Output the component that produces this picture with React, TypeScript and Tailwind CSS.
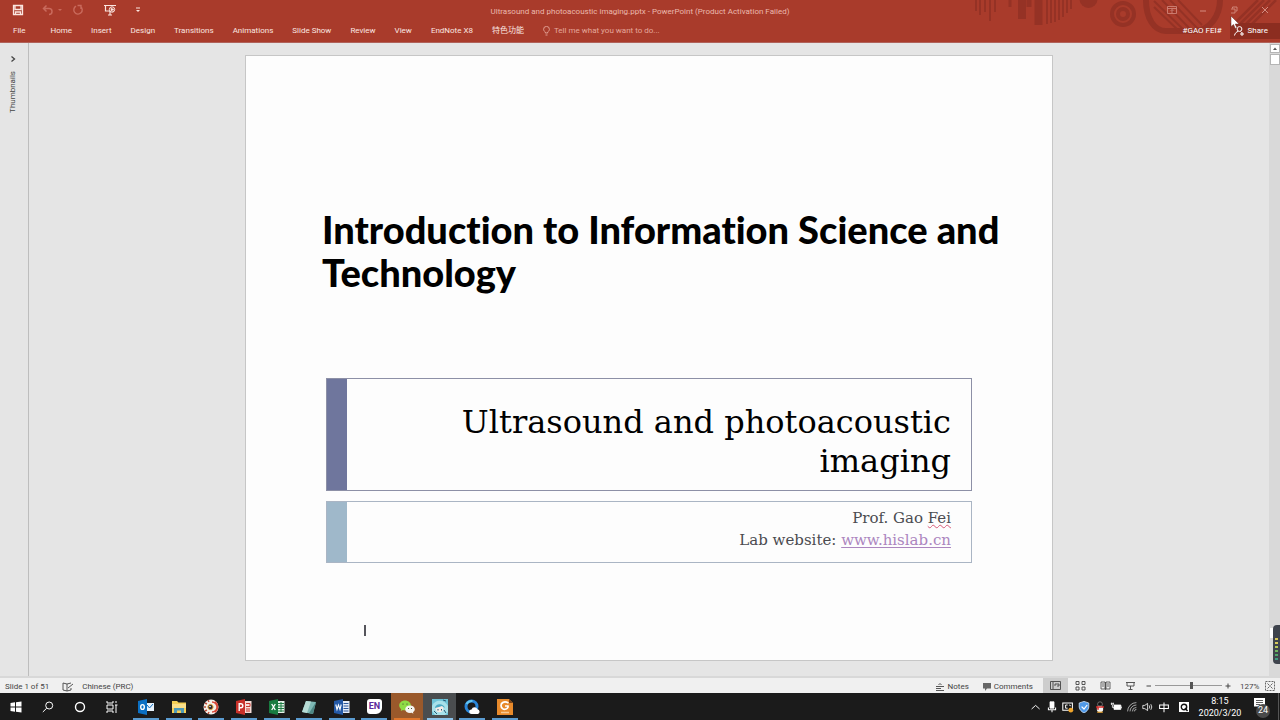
import type { ReactNode } from "react";

const tabs = ["Home", "Insert", "Design", "Transitions", "Animations", "Slide Show", "Review", "View", "EndNote X8", "特色功能"];

type IconProps = { label: string; children: ReactNode; className?: string; box?: string };

function Glyph({ children, className = "size-4", box = "0 0 16 16" }: Omit<IconProps, "label">) {
  return (
    <svg viewBox={box} className={className} fill="none" stroke="currentColor" aria-hidden="true">
      {children}
    </svg>
  );
}

function IconButton({ label, children, className = "" }: IconProps) {
  return (
    <button type="button" aria-label={label} className={`flex shrink-0 items-center justify-center ${className}`}>
      {children}
    </button>
  );
}

function HeaderPattern() {
  return (
    <svg viewBox="0 0 330 42" className="absolute top-0 right-0 h-[42px] w-[330px]" fill="none" stroke="#953225" aria-hidden="true">
      <path d="M26 0v11M30 0v15M35 0v12M40 0v21M45 0v12" strokeWidth="2" />
      <path d="M60 0v7" strokeWidth="3" />
      <path d="M72 0v19M88.500 0v25" strokeWidth="8" />
      <path d="M79 0v7" strokeWidth="5" />
      <path d="M97 0v24M101 0v23M105 0v22M109 0v20M113 0v17M117 0v13M121 0v9" strokeWidth="2" />
      <circle cx="138.500" cy="-1" r="9" fill="#953225" stroke="none" />
      <circle cx="173" cy="14" r="11" strokeWidth="4" />
      <circle cx="173" cy="14" r="5" strokeWidth="4" />
      <path d="M196 0c0 18 8 31 20 31h28c16 0 26-16 26-31" strokeWidth="6" />
      <path d="M204 7l26 25M204 1l32 31M212 0l30 31M220 0l28 29M228 0l24 25" strokeWidth="2" />
      <path d="M284 24L308 0M290 24L314 0M296 24L320 0M302 24L326 0" strokeWidth="2.500" />
    </svg>
  );
}

function Header() {
  return (
    <header className="relative flex flex-col border-b border-[#b0625a] bg-[#a93b2b] text-[#fbe6e0]">
      <HeaderPattern />
      <div className="relative grid h-5 grid-cols-[1fr_auto_1fr] items-center">
        <div className="flex items-center pl-3">
          <IconButton label="Save" className="w-3">
            <Glyph className="size-3" box="0 0 12 12">
              <path d="M1.500 1.500h9v9h-9zM3 1.500V5.500h6V1.500M3.500 10.500V8h5v2.500" strokeWidth="1.300" />
            </Glyph>
          </IconButton>
          <IconButton label="Undo" className="ml-4 w-4 text-[#c96a5c]">
            <Glyph className="size-3" box="0 0 12 12">
              <path d="M4.500 1.500L1.500 4.500l3 3M2 4.500h5a3 3 0 010 6" strokeWidth="1.500" />
            </Glyph>
          </IconButton>
          <IconButton label="Undo history" className="w-2 text-[#c96a5c]">
            <Glyph className="size-1" box="0 0 4 4"><path d="M0 1h4L2 3z" fill="currentColor" stroke="none" /></Glyph>
          </IconButton>
          <IconButton label="Repeat" className="ml-1 w-5 text-[#c96a5c]">
            <Glyph className="size-3" box="0 0 12 12">
              <path d="M4 2.200A4.200 4.200 0 1 0 8.500 2.500M5.500 1.500h3.500V5" strokeWidth="1.400" />
            </Glyph>
          </IconButton>
          <IconButton label="Start from beginning" className="ml-3 w-5">
            <Glyph className="size-3" box="0 0 12 12">
              <path d="M0 1.500h12M1.500 2v5h4M4 11h4M6 7v4" strokeWidth="1.200" />
              <circle cx="8" cy="5.500" r="2.700" />
              <path d="M7 4l3 1.500L7 7zM8 8l2-1" fill="currentColor" strokeWidth="0.500" />
            </Glyph>
          </IconButton>
          <IconButton label="Customize toolbar" className="ml-2 w-5">
            <Glyph className="size-1.5" box="0 0 6 6"><path d="M1 1h4" /><path d="M1 3h4L3 5z" fill="currentColor" stroke="none" /></Glyph>
          </IconButton>
        </div>
        <h1 className="pt-1 text-[8px] leading-4 text-[#ebb8ad]">
          Ultrasound and photoacoustic imaging.pptx - PowerPoint (Product Activation Failed)
        </h1>
        <div className="flex items-center justify-end text-[#d58c80]">
          <IconButton label="Ribbon display options" className="w-[31px]">
            <Glyph className="size-2.5" box="0 0 10 10"><path d="M.5 1.500h9v7h-9zM.5 3.500h9M5 8V4.500M3.500 6L5 4.500 6.500 6" strokeWidth="0.800" /></Glyph>
          </IconButton>
          <IconButton label="Minimize" className="w-[31px]">
            <Glyph className="size-2" box="0 0 8 8"><path d="M1 5h6" /></Glyph>
          </IconButton>
          <IconButton label="Restore" className="w-[31px]">
            <Glyph className="size-2" box="0 0 8 8"><path d="M1 3h4v4H1M2.500 2.500V1H7v4H5.500" strokeWidth="0.900" /></Glyph>
          </IconButton>
          <IconButton label="Close" className="w-[31px]">
            <Glyph className="size-2" box="0 0 8 8"><path d="M1 1l6 6M7 1L1 7" /></Glyph>
          </IconButton>
        </div>
      </div>
      <div className="relative flex h-[22px] items-start justify-between text-[8px] leading-[22px]">
        <nav aria-label="Ribbon" className="flex items-center gap-[19px] pl-[13px]">
          <button type="button" className="mr-1.5">File</button>
          {tabs.map((t) => (
            <button type="button" key={t}>{t}</button>
          ))}
          <button type="button" className="flex items-center gap-1 text-[#e5a79b]">
            <Glyph className="h-2.5 w-[7px]" box="0 0 7 10">
              <path d="M2.300 7V6C1 5 .6 4.200.6 3.300a2.900 2.900 0 015.800 0C6.400 4.200 6 5 4.700 6v1zM2.500 9h2" strokeWidth="0.900" />
            </Glyph>
            Tell me what you want to do...
          </button>
        </nav>
        <div className="flex items-center gap-2">
          <span className="text-white">#GAO FEI#</span>
          <button type="button" className="flex h-4 items-center gap-1 bg-[#8c2d20] pr-3 pl-1 text-white">
            <Glyph className="size-2.5" box="0 0 10 10">
              <circle cx="5.500" cy="3" r="2.400" />
              <path d="M.5 9.500C1 7 2.500 5.800 4.200 5.400M6.500 5.500l1 1M6 8h4M8 6v4" />
            </Glyph>
            Share
          </button>
        </div>
      </div>
      <svg viewBox="0 0 10 14" className="absolute top-4 right-[40px] h-3.5 w-2.5" aria-hidden="true">
        <path d="M1 0v10.500l2.500-2 1.800 4 1.700-.8-1.800-3.700H9z" fill="#fff" stroke="#6b2a22" strokeWidth="0.500" />
      </svg>
    </header>
  );
}

function Slide() {
  return (
    <article className="flex aspect-[4/3] w-[808px] max-w-full flex-col border border-[#c6c6c6] bg-[#fdfdfd] px-20 pt-[152px] text-black">
      <h2 className="-mr-8 -ml-1 font-['Lato',sans-serif] text-[38px] leading-[43px] font-black [font-variant-ligatures:none]">
        Introduction to Information Science and Technology
      </h2>
      <section className="mt-[84px] flex h-[113px] border border-[#8d90a6]">
        <div className="w-5 shrink-0 bg-[#6f769d]" />
        <p className="flex-1 pt-6 pr-5 pl-20 text-right font-['DejaVu_Serif',serif] text-[32px] leading-[39px]">
          Ultrasound and photoacoustic imaging
        </p>
      </section>
      <section className="mt-[10px] flex h-[62px] border border-[#aab5c4]">
        <div className="w-5 shrink-0 bg-[#9fb8ca]" />
        <div className="flex-1 pt-[5px] pr-5 text-right font-['DejaVu_Serif',serif] text-[15px] leading-[22px] text-[#4b4b50]">
          <p>Prof. Gao <span className="underline decoration-[#d85a78] decoration-wavy decoration-1 underline-offset-1">Fei</span></p>
          <p>Lab website: <a href="http://www.hislab.cn" className="text-[#ac86bf] underline underline-offset-2">www.hislab.cn</a></p>
        </div>
      </section>
      <div className="mt-[62px] ml-[38px] h-[11px] w-0.5 bg-[#55555c]" />
    </article>
  );
}

function Workspace() {
  return (
    <main className="flex flex-1 bg-[#e5e5e5]">
      <aside className="flex w-[29px] shrink-0 flex-col items-center border-r border-[#bdbdbd] pt-3 pr-[3px] text-[#444]">
        <IconButton label="Expand thumbnails" className="h-2 w-3">
          <Glyph className="size-1.5" box="0 0 6 6"><path d="M1.500.5L4.500 3 1.500 5.500" strokeWidth="1.300" /></Glyph>
        </IconButton>
        <span className="mt-2 rotate-180 text-[8px] leading-3 [writing-mode:vertical-rl]">Thumbnails</span>
      </aside>
      <div className="flex flex-1 items-start justify-center pt-3 pb-3.5">
        <Slide />
      </div>
      <div className="relative flex w-[11px] shrink-0 flex-col items-center gap-px bg-[#d9d9d9] pt-px">
        <IconButton label="Scroll up" className="h-[9px] w-[10px] border border-[#b5b5b5] bg-white">
          <Glyph className="size-1" box="0 0 4 4"><path d="M0 3h4L2 .5z" fill="#555" stroke="none" /></Glyph>
        </IconButton>
        <div className="h-[11px] w-[10px] border border-[#b5b5b5] bg-white" />
        <div className="absolute right-[2px] bottom-[38px] h-2.5 w-2 bg-white" />
        <div className="absolute right-0 bottom-3 flex h-[39px] w-[7px] flex-col items-center justify-end gap-0.5 rounded-l-sm bg-[#3f444d] pb-1">
          <span className="h-0.5 w-[3px] bg-[#d8c95a]" />
          <span className="h-0.5 w-[3px] bg-[#d8c95a]" />
          <span className="h-0.5 w-[3px] bg-[#b7c957]" />
          <span className="h-0.5 w-[3px] bg-[#6fb661]" />
          <span className="h-0.5 w-[3px] bg-[#4fa66b]" />
          <span className="h-0.5 w-[3px] bg-[#3f9a80]" />
        </div>
      </div>
    </main>
  );
}

function StatusBar() {
  return (
    <footer className="flex h-[17px] shrink-0 items-center justify-between border-t-2 border-[#d8d8d8] bg-[#f0f0f0] text-[8px] leading-4 text-[#444]">
      <div className="flex items-center pt-0.5 pl-[5px]">
        <span>Slide 1 of 51</span>
        <IconButton label="Spelling" className="ml-[13px] w-3">
          <Glyph className="h-2.5 w-3" box="0 0 12 10"><path d="M5 2v7L1 8V1zM5 2l4-1M5 9l4-1V6M6 6l5-4" strokeWidth="0.900" /></Glyph>
        </IconButton>
        <button type="button" className="ml-2">Chinese (PRC)</button>
      </div>
      <div className="flex items-center">
        <button type="button" className="flex items-center gap-1 pt-0.5">
          <Glyph className="size-2" box="0 0 8 8"><path d="M0 3.500h8M0 5.500h5M0 7.500h8M2.500 2L4 .5 5.500 2" strokeWidth="0.900" /></Glyph>
          Notes
        </button>
        <button type="button" className="ml-3.5 flex items-center gap-[3px] pt-0.5">
          <Glyph className="size-2" box="0 0 8 8"><path d="M0 0h8v5.500H4L2 8V5.500H0z" fill="#666" stroke="none" /></Glyph>
          Comments
        </button>
        <IconButton label="Normal view" className="ml-2.5 h-[15px] w-[25px] bg-[#cdcdcd]">
          <Glyph className="h-2.5 w-[11px]" box="0 0 11 10"><path d="M.5.5h10v8H.5zM3 1v7M5 5V3h4v2H7" strokeWidth="0.900" /></Glyph>
        </IconButton>
        <IconButton label="Slide sorter" className="w-[25px]">
          <Glyph className="h-2.5 w-[11px]" box="0 0 11 10"><path d="M1 .5h3v3H1zM7 .5h3v3H7zM1 6h3v3H1zM7 6h3v3H7z" strokeWidth="0.900" /></Glyph>
        </IconButton>
        <IconButton label="Reading view" className="w-[25px]">
          <Glyph className="h-2.5 w-[11px]" box="0 0 11 10"><path d="M1 1h4v7H1zM6 1h4v7H6zM5.500 1v8M2 3h2M2 5h2M7 3h2M7 5h2" strokeWidth="0.800" /></Glyph>
        </IconButton>
        <IconButton label="Slide show" className="w-[25px]">
          <Glyph className="h-2.5 w-[11px]" box="0 0 11 10"><path d="M1 1.500h9M2 2v3h7V2M5.500 5v3M3.500 8.500h4" strokeWidth="0.900" /></Glyph>
        </IconButton>
        <IconButton label="Zoom out" className="w-3">
          <Glyph className="size-1.5" box="0 0 6 6"><path d="M.5 3h4.500" /></Glyph>
        </IconButton>
        <input
          type="range"
          aria-label="Zoom"
          min={0}
          max={100}
          defaultValue={55}
          className="h-2 w-[67px] appearance-none bg-transparent [&::-webkit-slider-runnable-track]:h-px [&::-webkit-slider-runnable-track]:bg-[#999] [&::-webkit-slider-thumb]:-mt-[3px] [&::-webkit-slider-thumb]:h-[7px] [&::-webkit-slider-thumb]:w-[3px] [&::-webkit-slider-thumb]:appearance-none [&::-webkit-slider-thumb]:bg-[#555]"
        />
        <IconButton label="Zoom in" className="w-3">
          <Glyph className="size-1.5" box="0 0 6 6"><path d="M.5 3h5M3 .5v5" /></Glyph>
        </IconButton>
        <span className="ml-1.5 w-[18px] pt-0.5 whitespace-nowrap">127%</span>
        <IconButton label="Fit to window" className="mr-1 ml-1.5 w-3">
          <Glyph className="size-2.5" box="0 0 10 10"><path d="M.5.500h9v9h-9z" strokeDasharray="2 1" strokeWidth="0.800" /><path d="M2.500 2.500l2 2M7.500 2.500l-2 2M2.500 7.500l2-2M7.500 7.500l-2-2" strokeWidth="0.800" /></Glyph>
        </IconButton>
      </div>
    </footer>
  );
}

const icon = "h-4 w-4";

const systemButtons = [
  {
    label: "Start",
    art: <Glyph className="size-3"  box="0 0 12 12"><path d="M.5 2L5 1.300v4.200H.5zM6 1.200L11.500.4v5.100H6zM.5 6.500H5v4.200L.5 10zM6 6.500h5.500v5.100L6 10.800z" fill="#fff" stroke="none" /></Glyph>,
  },
  { label: "Search", art: <Glyph className="size-3" box="0 0 12 12"><circle cx="7.200" cy="4.500" r="3.500" /><path d="M4.700 7.200L.8 11" /></Glyph> },
  { label: "Cortana", art: <Glyph className="size-3" box="0 0 12 12"><circle cx="6" cy="6" r="4.500" strokeWidth="1.400" /></Glyph> },
  { label: "Task view", art: <Glyph className="size-3" box="0 0 12 12"><path d="M1 0v2h6V0M1 12v-2h6v2M1 4h6v4H1zM10 0v2M10 4v8M9 4h2.500" strokeWidth="1" /></Glyph> },
];

type App = { label: string; bg: string; bar: string; art: ReactNode };

const plain = "bg-transparent";
const blueBar = "bg-[#5a9bd0]";

const apps: App[] = [
  {
    label: "Outlook", bg: plain, bar: blueBar,
    art: (
      <Glyph className={icon}>
        <path d="M8 4h8v8H8z" fill="#e8f2fb" stroke="none" /><path d="M9 6l2.500 3L15 5" stroke="#0f6cbd" />
        <path d="M0 2l9-2v16l-9-2z" fill="#0b70c4" stroke="none" /><ellipse cx="4.500" cy="8" rx="1.800" ry="2.400" stroke="#fff" strokeWidth="1.400" />
      </Glyph>
    ),
  },
  {
    label: "File Explorer", bg: plain, bar: blueBar,
    art: (
      <Glyph className={icon}>
        <path d="M1 2h5l1.500 1.500H15V14H1z" fill="#f4cf56" stroke="none" /><path d="M1 5h14v4H1z" fill="#fbe08a" stroke="none" />
        <path d="M3 14V9h10v5h-3v-2.500H6V14z" fill="#4f9bb8" stroke="none" />
      </Glyph>
    ),
  },
  {
    label: "Recorder", bg: plain, bar: blueBar,
    art: (
      <Glyph className={icon}>
        <circle cx="8" cy="8" r="7.500" fill="#f5f1ea" stroke="none" />
        <path d="M9 3a5 5 0 010 10M12 2.500a7 7 0 010 11" stroke="#d84a3a" strokeWidth="1.400" />
        <path d="M2 4l2 1M1 8h2M2 12l2-1M5 1l1 2M5 15l1-2" stroke="#be513e" strokeWidth="1.500" />
        <circle cx="7.500" cy="8" r="2.600" fill="#2c2730" stroke="#e2a43a" /><circle cx="7" cy="7.500" r=".8" fill="#fff" stroke="none" />
      </Glyph>
    ),
  },
  {
    label: "PowerPoint", bg: plain, bar: blueBar,
    art: (
      <Glyph className={icon}>
        <path d="M8 2h7.500v12H8z" fill="#f6dcd8" stroke="none" /><path d="M10 4.500h4v3h-4M10 10h4M10 12h4" stroke="#c8372d" />
        <path d="M0 2l9-2v16l-9-2z" fill="#c8312a" stroke="none" /><path d="M3.200 12V4.800h1.600a1.900 1.900 0 010 4H3.200" stroke="#fff" strokeWidth="1.400" />
      </Glyph>
    ),
  },
  {
    label: "Excel", bg: plain, bar: blueBar,
    art: (
      <Glyph className={icon}>
        <path d="M8 2h7.500v12H8z" fill="#e5f2e9" stroke="none" /><path d="M9 4.500h6M9 7h6M9 9.500h6M9 12h6M12 3v10" stroke="#1f7c45" />
        <path d="M0 2l9-2v16l-9-2z" fill="#187b40" stroke="none" /><path d="M2.700 5l3.600 6M6.300 5l-3.600 6" stroke="#fff" strokeWidth="1.300" />
      </Glyph>
    ),
  },
  {
    label: "Notes", bg: plain, bar: blueBar,
    art: (
      <Glyph className={icon}>
        <path d="M5 2l10 1-3 12-11-2z" fill="#7fb9b5" stroke="none" /><path d="M5 2l5 .5L6 14l-5-1z" fill="#b7dcd6" stroke="none" /><path d="M15 3l-3 12-4-.8z" fill="#4e8785" stroke="none" />
      </Glyph>
    ),
  },
  {
    label: "Word", bg: plain, bar: blueBar,
    art: (
      <Glyph className={icon}>
        <path d="M8 2h7.500v12H8z" fill="#e6edf8" stroke="none" /><path d="M9.500 4.500h5M9.500 7h5M9.500 9.500h5M9.500 12h5" stroke="#2b579a" />
        <path d="M0 2l9-2v16l-9-2z" fill="#2459a6" stroke="none" /><path d="M1.800 5.500L3 10.500 4.500 6 6 10.500 7.200 5.500" stroke="#fff" strokeWidth="1.100" />
      </Glyph>
    ),
  },
  {
    label: "EndNote", bg: plain, bar: blueBar,
    art: <span className="flex size-[15px] items-center justify-center rounded-[3px] rounded-br-md bg-white text-[9px] leading-none font-bold text-[#5b2a9a]">EN</span>,
  },
  {
    label: "WeChat", bg: "bg-[#9a592b]", bar: "bg-[#e0762c]",
    art: (
      <Glyph className={icon}>
        <path d="M6 1.500C2.800 1.500.2 3.700.2 6.400c0 1.500.8 2.800 2 3.700L1.800 12l2.100-1.100c3.900 1.100 8-1.100 8-4.500 0-2.700-2.600-4.900-5.900-4.900z" fill="#8edb45" stroke="none" />
        <path d="M11 6.500c-2.700 0-4.800 1.700-4.800 3.800S8.300 14 11 14l1.700-.2 1.700.9-.4-1.500c1.100-.7 1.800-1.700 1.800-2.900 0-2.100-2.100-3.800-4.800-3.800z" fill="#f4f4f0" stroke="none" />
        <path d="M4 4.500v1.200M8 4.500v1.200M9.500 9v1M12.500 9v1" stroke="#4a5a36" />
      </Glyph>
    ),
  },
  {
    label: "Avatar", bg: "bg-[#4a4d4f]", bar: "bg-[#8cc4ec]",
    art: (
      <Glyph className={icon}>
        <path d="M0 0h16v16H0z" fill="#6ec4d8" stroke="none" /><path d="M0 7c2-6 12-8 16 0v6l-3 3H3l-3-4z" fill="#a8e1ea" stroke="none" />
        <circle cx="7.500" cy="9.500" r="3.800" fill="#f7ebe6" stroke="none" /><path d="M3 9c0-4 8-6 10 0L10 7 7 8z" fill="#4aa9c3" stroke="none" />
        <path d="M6 10v1.500M9.500 10v1.500" stroke="#205f80" /><path d="M11 1l3 1M2 12l3 3M12 11l2 3" stroke="#285b75" />
      </Glyph>
    ),
  },
  {
    label: "QQ Browser", bg: plain, bar: blueBar,
    art: (
      <Glyph className={icon}>
        <circle cx="7.500" cy="7.500" r="5.500" stroke="#2a86d8" strokeWidth="3" /><path d="M2.500 5a6 6 0 016-3" stroke="#64c6f0" strokeWidth="2" />
        <path d="M7.500 15a2.300 2.300 0 010-4.600 3.300 3.300 0 016-.2 2.500 2.500 0 01.5 4.800z" fill="#fff" stroke="none" />
      </Glyph>
    ),
  },
  {
    label: "Foxit Reader", bg: plain, bar: blueBar,
    art: (
      <Glyph className={icon}>
        <path d="M0 0h12l4 4v12H0z" fill="#e88a2b" stroke="none" /><path d="M12 0l4 4h-4z" fill="#7b451b" stroke="none" />
        <path d="M11.500 4C7 1.500 4 4 4 6.500S6.500 11 9 10s2-3 2-3H8" stroke="#fff" strokeWidth="1.700" /><path d="M4 13.500h8" stroke="#f8c995" strokeWidth="1.500" />
      </Glyph>
    ),
  },
];

const tray = [
  { label: "Show hidden icons", art: <path d="M2 10l5-4.500L12 10" strokeWidth="1.200" /> },
  { label: "Microphone", art: <><path d="M5 1h5v8H5z" fill="#fff" /><path d="M3 8v3h9V8M7.500 11v3" strokeWidth="1.300" /></> },
  { label: "Screen", art: <><path d="M1 2.500h12v9H1z" strokeWidth="1.300" /><path d="M7 5H4.500v4H7M9 5l2 1" strokeWidth="1.200" /><circle cx="11" cy="11.500" r="3" fill="#f0a52b" stroke="none" /></> },
  { label: "Security", art: <><path d="M7.500.5l6 2v5c0 3-3 6-6 7.500-3-1.500-6-4.500-6-7.500v-5z" fill="#4f99e8" stroke="#cfe4fa" /><path d="M4.500 7l3 3 4-5" stroke="#fff" strokeWidth="1.500" /></> },
  { label: "QQ", art: <><circle cx="7.500" cy="4" r="3" fill="#111" stroke="#999" strokeWidth=".8" /><circle cx="7.500" cy="10" r="4" fill="#f3f3f3" stroke="none" /><path d="M2.500 7.500h10M5 8v3" stroke="#d62e2b" strokeWidth="2" /><path d="M4 14h7" stroke="#e6a12e" strokeWidth="1.500" /></> },
  { label: "Power", art: <><path d="M5 5h8.500v5.500H5z" fill="#fff" /><path d="M14.500 7v2M1 3.500h4M2 2v3M4 2v3M3 5v3h2" /></> },
  { label: "Network", art: <path d="M2 13A11 11 0 0113 2M5 13a8 8 0 018-8M8 13a5 5 0 015-5M10.500 13a2.500 2.500 0 012.500-2.500" stroke="#c8c8c8" /> },
  { label: "Volume", art: <path d="M1 5.500h2.500L7 3v9L3.500 9.500H1zM9 5.500q1.500 2 0 4M11 4q2.500 3.500 0 7" /> },
  { label: "Input language", art: <path d="M2 5h11v4.500H2zM7.500 2v12" strokeWidth="1.300" /> },
];

function Taskbar() {
  return (
    <div className="flex h-[27px] shrink-0 justify-between bg-[#1b1b1b] text-white">
      <nav aria-label="Taskbar" className="flex">
        {systemButtons.map((b) => (
          <IconButton key={b.label} label={b.label} className="w-8">{b.art}</IconButton>
        ))}
        <div className="ml-0.5 grid w-[391px] grid-cols-12">
          {apps.map((a) => (
            <button type="button" key={a.label} aria-label={a.label} className={`flex flex-col items-center ${a.bg}`}>
              <span className="flex flex-1 items-center pt-0.5">{a.art}</span>
              <span className={`h-0.5 w-[26px] ${a.bar}`} />
            </button>
          ))}
        </div>
      </nav>
      <div className="flex items-center">
        {tray.map((t) => (
          <IconButton key={t.label} label={t.label} className="w-4">
            <Glyph className="size-3" box="0 0 15 15">{t.art}</Glyph>
          </IconButton>
        ))}
        <IconButton label="Input method" className="ml-0.5 w-5">
          <Glyph className="size-2.5" box="0 0 10 10"><path d="M0 0h10v10H0z" fill="#fff" stroke="none" /><circle cx="5" cy="5" r="2.700" stroke="#111" strokeWidth="1.400" /><path d="M6 6l2.500 3" stroke="#111" strokeWidth="1.400" /></Glyph>
        </IconButton>
        <button type="button" className="w-[52px] text-center text-[9px] leading-3">
          <span className="block">8:15</span>
          <span className="block">2020/3/20</span>
        </button>
        <button type="button" aria-label="24 notifications" className="relative mr-1.5 ml-2 flex size-[18px] items-start">
          <Glyph className="size-3" box="0 0 12 12"><path d="M0 0h11v8.500H7L4.500 11V8.500H0z" fill="#fff" stroke="none" /><path d="M2 2.500h7M2 4.500h7M2 6.500h4" stroke="#333" strokeWidth=".8" /></Glyph>
          <span className="absolute top-1.5 left-0.5 flex size-[14px] items-center justify-center rounded-full bg-[#4a4a4a] text-[9px] leading-none">24</span>
        </button>
        <span className="h-full w-0.5 border-l border-[#555]" />
      </div>
    </div>
  );
}

export default function App() {
  return (
    <div className="flex min-h-screen flex-col font-['Roboto','Noto_Sans_CJK_SC',sans-serif]">
      <Header />
      <Workspace />
      <StatusBar />
      <Taskbar />
    </div>
  );
}
